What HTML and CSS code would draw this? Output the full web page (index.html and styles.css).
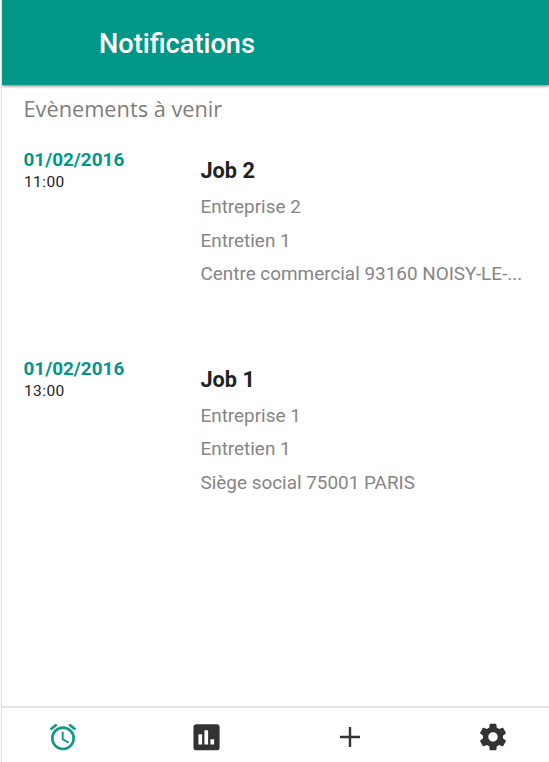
FILE: index.html
```html
<!DOCTYPE html>
<html lang="fr">
<head>
<meta charset="utf-8">
<title>Notifications</title>
<link rel="stylesheet" href="styles.css">
</head>
<body>
<div class="app">
  <header class="toolbar"><h1>Notifications</h1></header>
  <main>
    <h2>Evènements à venir</h2>
    <article class="event">
      <div class="when"><div class="date">01/02/2016</div><div class="time">11:00</div></div>
      <div class="info">
        <h3>Job 2</h3>
        <p>Entreprise 2</p>
        <p>Entretien 1</p>
        <p>Centre commercial 93160 NOISY-LE-...</p>
      </div>
    </article>
    <article class="event">
      <div class="when"><div class="date">01/02/2016</div><div class="time">13:00</div></div>
      <div class="info">
        <h3>Job 1</h3>
        <p>Entreprise 1</p>
        <p>Entretien 1</p>
        <p>Siège social 75001 PARIS</p>
      </div>
    </article>
  </main>
  <nav class="tabs">
    <a class="active"><svg viewBox="0 0 24 24"><path d="M12.500 8H11v6l4.750 2.850.75-1.230-4-2.370V8zM17.337 1.810l4.607 3.845-1.280 1.535-4.610-3.843 1.282-1.537zM6.663 1.810l1.282 1.536L3.337 7.190l-1.280-1.536L6.663 1.810zM12 4a9 9 0 1 0 .001 18A9 9 0 0 0 12 4zm0 16a7 7 0 1 1 0-14 7 7 0 0 1 0 14z"/></svg></a>
    <a><svg viewBox="0 0 24 24"><path d="M20.200 2.400H4.600c-1.100 0-2 .9-2 2v15.600c0 1.100.9 2 2 2h15.600c1.100 0 2-.9 2-2V4.400c0-1.100-.9-2-2-2zM9.100 17.700H6.300V10h2.800v7.700zm4.500 0h-2.800V7h2.800v10.700zm4.500 0h-2.800v-4h2.800v4z"/></svg></a>
    <a><svg viewBox="0 0 24 24"><path d="M19.500 12.900h-6.600v6.600h-1.800v-6.600H4.500v-1.800h6.600V4.500h1.800v6.600h6.600v1.800z"/></svg></a>
    <a><svg viewBox="0 0 24 24"><path d="M19.430 12.980c.04-.32.07-.64.07-.98s-.03-.66-.07-.98l2.110-1.650c.19-.15.24-.42.12-.64l-2-3.460c-.12-.22-.39-.3-.61-.22l-2.490 1c-.52-.4-1.080-.73-1.690-.98l-.38-2.650C14.460 2.180 14.250 2 14 2h-4c-.25 0-.46.18-.49.42l-.38 2.650c-.61.25-1.170.59-1.690.98l-2.490-1c-.23-.09-.49 0-.61.22l-2 3.460c-.13.22-.07.49.12.64l2.110 1.650c-.04.32-.07.65-.07.98s.03.66.07.98l-2.110 1.650c-.19.15-.24.42-.12.64l2 3.460c.12.22.39.3.61.22l2.490-1c.52.4 1.080.73 1.690.98l.38 2.650c.03.24.24.42.49.42h4c.25 0 .46-.18.49-.42l.38-2.650c.61-.25 1.170-.59 1.690-.98l2.490 1c.23.09.49 0 .61-.22l2-3.460c.12-.22.07-.49-.12-.64l-2.110-1.650zM12 15.500c-1.930 0-3.500-1.570-3.500-3.500s1.570-3.500 3.500-3.500 3.500 1.570 3.500 3.500-1.570 3.500-3.500 3.500z"/></svg></a>
  </nav>
</div>
</body>
</html>
```
FILE: styles.css
```css
* { box-sizing: border-box; }
body { margin: 0; background: #fff; font-family: Roboto, sans-serif; }
h1, h2, h3, p { margin: 0; }
.app { height: 762px; margin-left: 1px; border-left: 1px solid #ddd; display: flex; flex-direction: column; overflow: hidden; }
.toolbar { height: 85px; flex: none; background: #009688; padding: 2px 0 0 97px; display: flex; align-items: center; box-shadow: 0 1px 3px rgba(0,0,0,.55); }
h1 { color: #fff; font-size: 27.200px; font-weight: 500; line-height: 32px; }
main { flex: 1; min-height: 0; padding: 8px 22px 0; }
h2 { font: 400 21.750px/32px "Open Sans", sans-serif; color: #7d7d7d; margin-left: -.5px; }
.event { display: flex; height: 208.5px; padding-top: 24px; }
.when { width: 177px; flex: none; }
.date { color: #009688; font-size: 18.900px; font-weight: 700; line-height: 22px; margin-left: -.5px; }
.time { color: #212121; font-size: 15.500px; line-height: 23px; letter-spacing: .4px; }
.info { width: 326px; padding-top: 9px; margin-left: -.5px; }
h3 { color: #212121; font-size: 21.700px; font-weight: 700; line-height: 26px; margin-bottom: 6px; }
p { color: #858585; font-size: 18.900px; line-height: 33.500px; white-space: nowrap; }
.tabs { height: 56px; flex: none; border-top: 2px solid #e4e4e4; display: flex; justify-content: space-between; align-items: center; padding: 3px 40px 0 45px; }
.tabs a { width: 32px; height: 32px; color: #333; }
.tabs .active { color: #159688; }
.tabs svg { width: 32px; height: 32px; display: block; fill: currentColor; }
```
